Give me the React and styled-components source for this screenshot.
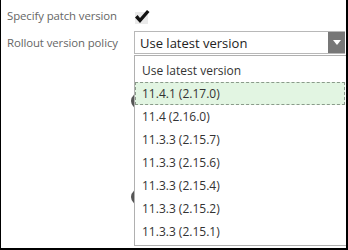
import React from "react";
import styled, { createGlobalStyle } from "styled-components";

const Global = createGlobalStyle`
  html, body { margin: 0; padding: 0; background: #fff; }
  body { font-family: "Open Sans", "Liberation Sans", sans-serif; }
`;

const versoes = [
  "11.4.1 (2.17.0)",
  "11.4 (2.16.0)",
  "11.3.3 (2.15.7)",
  "11.3.3 (2.15.6)",
  "11.3.3 (2.15.4)",
  "11.3.3 (2.15.2)",
  "11.3.3 (2.15.1)",
];

export default function App() {
  return (
    <>
      <Global />
      <Frame>
        <Form>
          <Label>Specify patch version</Label>
          <Check>
            <svg width="16" height="15" viewBox="0 0 16 15">
              <path d="M1 8.5 L3.6 6 L6 9 L13 1 L15.5 3 L6 14 Z" fill="#111" />
            </svg>
          </Check>
          <Label>Rollout version policy</Label>
          <Select>
            <span>Use latest version</span>
            <Arrow>
              <svg width="8" height="5" viewBox="0 0 8 5">
                <path d="M0 0h8L4 5z" fill="#fff" />
              </svg>
            </Arrow>
          </Select>
        </Form>
        <Below>
          <Knob />
          <Knob />
        </Below>
        <Lista>
          <Opcao>Use latest version</Opcao>
          {versoes.map((v, i) => (
            <Opcao key={v + i} ativo={i === 0}>{v}</Opcao>
          ))}
        </Lista>
      </Frame>
    </>
  );
}

const Frame = styled.div`
  position: relative;
  width: 348px;
  height: 250px;
  box-sizing: border-box;
  border-left: 1px solid #000;
  border-right: 2px solid #000;
  border-bottom: 2px solid #000;
  overflow: hidden;
`;

const Form = styled.div`
  display: grid;
  grid-template-columns: 127px 211px;
  grid-auto-rows: auto;
  align-items: center;
  row-gap: 4px;
  padding: 5px 0 0 6px;
`;

const Label = styled.div`
  font-size: 11.4px;
  letter-spacing: -0.1px;
  color: #666;
  line-height: 22px;
  white-space: nowrap;
`;

const Check = styled.div`
  position: relative;
  width: 13px;
  height: 12px;
  margin: 3px 0 0 1px;
  background: #eaeaea;

  svg {
    position: absolute;
    left: -1px;
    top: -3px;
  }
`;

const Select = styled.div`
  height: 23px;
  box-sizing: border-box;
  border: 1px solid #b8b8b8;
  border-right: none;
  display: flex;
  align-items: center;
  font-size: 13px;
  color: #222;
  padding-left: 5px;

  span { flex: 1; }
`;

const Arrow = styled.div`
  width: 17px;
  height: 21px;
  background: #777;
  display: flex;
  align-items: center;
  justify-content: center;
`;

const Below = styled.div`
  display: flex;
  flex-direction: column;
  gap: 78px;
  padding: 38px 0 0 130px;
`;

const Knob = styled.div`
  width: 20px;
  height: 18px;
  border-radius: 50%;
  background: #555;
`;

const Lista = styled.ul`
  position: absolute;
  left: 133px;
  top: 55px;
  width: 212px;
  height: 191px;
  box-sizing: border-box;
  margin: 0;
  padding: 3px 0 0;
  list-style: none;
  background: #fff;
  border: 1px solid #b0b0b0;
  border-right: none;
`;

const Opcao = styled.li`
  height: 23px;
  box-sizing: border-box;
  padding-left: 6px;
  display: flex;
  align-items: center;
  font-size: 12px;
  color: #333;
  border: 1px dashed transparent;
  border-color: ${(p) => (p.ativo ? "#8a9a8a" : "transparent")};
  background: ${(p) => (p.ativo ? "#e2f5e2" : "transparent")};
  margin-right: 1px;
`;
